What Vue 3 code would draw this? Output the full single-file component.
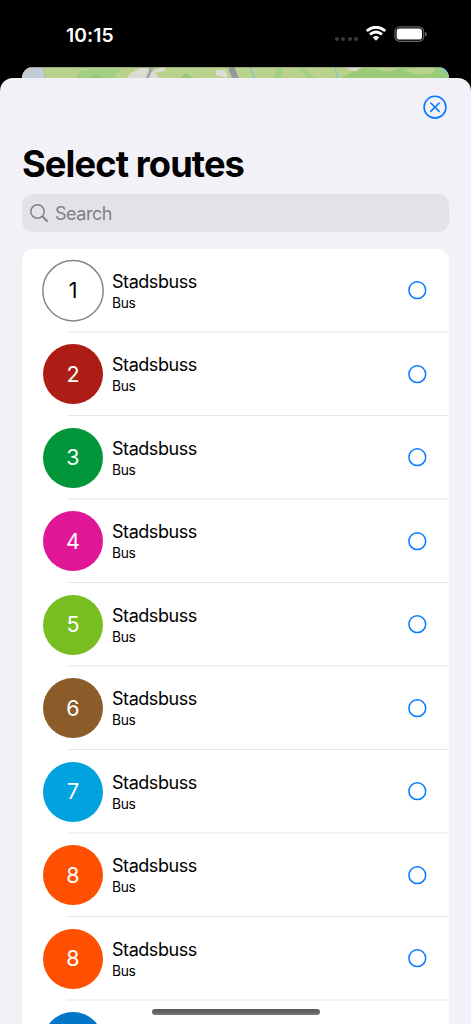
<script setup>
const routes = [
  { number: '1', color: '#ffffff', outlined: true },
  { number: '2', color: '#ad1d15' },
  { number: '3', color: '#009639' },
  { number: '4', color: '#e01696' },
  { number: '5', color: '#78be20' },
  { number: '6', color: '#8b5b29' },
  { number: '7', color: '#00a3e0' },
  { number: '8', color: '#ff4f00' },
  { number: '8', color: '#ff4f00' },
  { number: '', color: '#0077c8' },
]
</script>

<template>
  <div class="phone">
    <header class="status">
      <span class="time">10:15</span>
      <div class="indicators">
        <span class="signal"><i v-for="n in 4" :key="n"></i></span>
        <svg class="wifi" width="20" height="15" viewBox="0 0 20 15" fill="none" stroke="#fff">
          <path d="M.8 5 Q10 -2.6 19.2 5" stroke-width="2.8" />
          <path d="M4 8.4 Q10 3.5 16 8.4" stroke-width="2.8" />
          <path d="M6.8 11.5 Q10 8.6 13.2 11.5 L10 14.8 Z" fill="#fff" stroke="none" />
        </svg>
        <svg class="battery" width="34" height="17" viewBox="0 0 34 17">
          <rect x=".9" y=".9" width="28.8" height="14.4" rx="4.8" fill="none" stroke="#666" stroke-width="1.2" />
          <rect x="2.6" y="2.6" width="25.4" height="11" rx="3.2" fill="#fff" />
          <path d="M31 5.8 Q32.8 6.6 32.8 8.2 T31 10.6 Z" fill="#666" />
        </svg>
      </div>
    </header>

    <div class="map">
      <svg width="427" height="24" viewBox="0 0 427 24">
        <rect width="427" height="24" fill="#bad38c" />
        <path d="M0 0H21L24 24H0Z" fill="#c3ccd6" />
        <path d="M21 0L24 12" stroke="#b0bbc5" stroke-width="1" />
        <path d="M55 11L57 4L72 2L84 2H100L91 11Z" fill="#a3cf80" />
        <path d="M68 11L75 7L80 11Z" fill="#91c876" />
        <path d="M105 11L109 6L118 1H125L130 5L139 0H143V4L133 6L138 11Z" fill="#dcdcd3" />
        <path d="M130 0L125 12" stroke="#a0a5ab" stroke-width="3" />
        <path d="M158 11L164 6L171 11Z" fill="#95ca77" />
        <path d="M194 3L203 3L206 8L204 11L194 8Z" fill="#dcdcd3" />
        <path d="M209 0L214 12" stroke="#94979f" stroke-width="6" />
        <path d="M228 0L233 12" stroke="#7bc5d5" stroke-width="1.3" />
        <path d="M252 12L255 1L261 2L259 12ZM280 0L293 11H286L278 3Z" fill="#9ed080" />
        <path d="M313 0L316 12" stroke="#7bc5d5" stroke-width="1.3" />
        <path d="M319 11L328 6L340 1L354 2L365 5L380 1H427V12H319Z" fill="#99cb78" />
        <path d="M322 0H341L334 4L328 3Z" fill="#dcdcd3" />
        <path d="M380 3L395 1H414L411 6L397 8Z" fill="#b9d38a" />
        <path d="M419 0L427 6" stroke="#75c4d8" stroke-width="3" />
        <path d="M0 .3H427" stroke="#777b65" stroke-width=".6" />
      </svg>
    </div>

    <main class="sheet">
      <button class="close" aria-label="Close">
        <svg width="24" height="24" viewBox="0 0 24 24" fill="none" stroke="#087cff" stroke-linecap="round">
          <circle cx="12" cy="12.2" r="10.9" stroke-width="1.6" />
          <path d="M7.8 8L16.2 16.4M16.2 8L7.8 16.4" stroke-width="1.6" />
        </svg>
      </button>
      <h1>Select routes</h1>
      <div class="search">
        <svg width="19" height="19" viewBox="0 0 19 19" fill="none" stroke="#808086" stroke-linecap="round">
          <circle cx="7.5" cy="7.5" r="6.7" stroke-width="1.5" />
          <path d="M12.4 12.4L17 17" stroke-width="2" />
        </svg>
        <span>Search</span>
      </div>
      <ul class="routes">
        <li v-for="(route, index) in routes" :key="index" class="route">
          <div class="badge" :style="{ backgroundColor: route.color }">
            <svg v-if="route.outlined" class="ring" width="64" height="64" viewBox="0 0 64 64">
              <circle cx="32" cy="31.7" r="30.2" fill="none" stroke="#87878a" stroke-width="1.5" />
            </svg>
            {{ route.number }}
          </div>
          <template v-if="route.number">
            <div class="details">
              <span class="name">Stadsbuss</span>
              <span class="kind">Bus</span>
            </div>
            <svg class="choice" width="20" height="20" viewBox="0 0 20 20">
              <circle cx="10.3" cy="10.2" r="8.4" fill="none" stroke="#087cff" stroke-width="1.5" />
            </svg>
          </template>
        </li>
      </ul>
    </main>
    <div class="home"></div>
  </div>
</template>

<style>
body { margin: 0; background: #000; }
</style>

<style scoped>
.phone { position: relative; width: 471px; height: 1024px; overflow: hidden; background: #000; color: #000; font-family: Inter, "Liberation Sans", sans-serif; display: flex; flex-direction: column; }
.status { height: 66.5px; flex: none; display: flex; justify-content: space-between; box-sizing: border-box; padding: 24px 43px 0 66px; color: #fff; }
.time { font-size: 19.3px; line-height: 22px; font-weight: 600; letter-spacing: 0.1px; }
.indicators { display: flex; align-items: flex-start; }
.signal { display: flex; gap: 2.5px; margin: 13px 8px 0 0; }
.signal i { width: 4px; height: 4px; border-radius: 50%; background: #3b3b3b; }
.wifi { margin: 2px 8px 0 0; }
.battery { margin-top: 2px; }
.map { flex: none; height: 24px; margin: 0 22px; border-radius: 11px 11px 0 0; overflow: hidden; }
.map svg { display: block; }
.sheet { flex: 1; min-height: 0; box-sizing: border-box; margin-top: -13px; padding: 17.5px 22px 0; position: relative; overflow: hidden; border-radius: 13px 13px 0 0; background: #f2f1f7; display: flex; flex-direction: column; }
.close { flex: none; align-self: flex-end; margin: 0 2px 0 0; width: 24px; height: 24px; padding: 0; border: 0; background: none; }
.close svg { display: block; }
h1 { flex: none; margin: 23px 0 0; font-size: 36.3px; font-weight: 700; line-height: 45px; letter-spacing: -0.9px; white-space: nowrap; }
.search { flex: none; height: 38px; margin-top: 7px; box-sizing: border-box; padding-left: 8px; display: flex; align-items: center; gap: 6px; border-radius: 11px; background: #e3e2e8; color: #808086; font-size: 18px; letter-spacing: -0.45px; }
.search span { padding-top: 1px; }
.routes { margin: 17px 0 0; padding: 0; list-style: none; border-radius: 11px 11px 0 0; background: #fff; }
.route { height: 83.5px; box-sizing: border-box; padding: 0 22px 0 21px; display: flex; align-items: center; background: linear-gradient(#e7e7e9, #e7e7e9) 44.5px 100% / 383px 1px no-repeat; }
.route:nth-child(odd) { background: linear-gradient(#f2f2f3, #f2f2f3) 44.5px 100% / 383px 2px no-repeat; }
.badge { position: relative; width: 60px; height: 60px; box-sizing: border-box; padding-bottom: 1px; flex: none; display: flex; align-items: center; justify-content: center; border-radius: 50%; color: #fff; font-size: 21.5px; }
.badge:has(.ring) { color: #000; }
.ring { position: absolute; left: -2px; top: -2px; }
.details { flex: 1; margin: 1.4px 0 0 9px; display: flex; flex-direction: column; }
.name { font-size: 18px; line-height: 23px; letter-spacing: -0.45px; }
.kind { font-size: 13.8px; line-height: 20px; padding-top: 0; letter-spacing: -0.35px; }
.choice { flex: none; margin-bottom: 0.6px; }
.home { position: absolute; left: 151.5px; bottom: 9px; width: 168.5px; height: 6px; border-radius: 3px; background: linear-gradient(#555753, #777); }
</style>
